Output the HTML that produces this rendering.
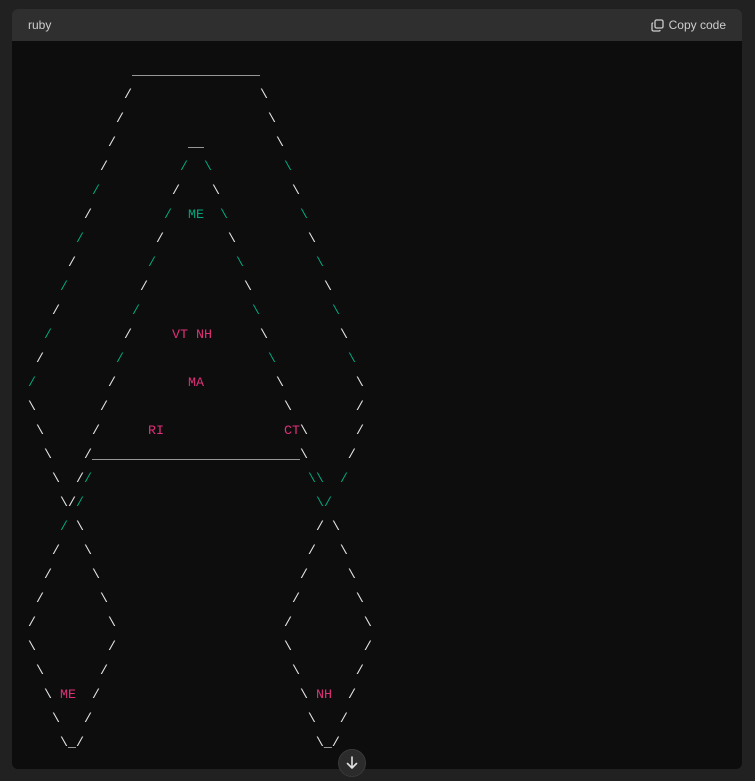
<!DOCTYPE html>
<html><head><meta charset="utf-8"><style>
html,body{margin:0;padding:0;background:#212121;width:755px;height:781px;overflow:hidden}
.box{position:absolute;left:12px;top:9px;width:730px;height:760px;background:#0d0d0d;border-radius:6px;overflow:hidden}
.hd{height:32px;background:#2f2f2f;position:relative;font-family:"Liberation Sans",sans-serif;font-size:12px;color:#cdcdcd}
.hd .l{position:absolute;left:16px;top:9px}
.hd .r{position:absolute;right:16px;top:9px;display:flex;align-items:center;gap:5px}
pre{position:absolute;left:16px;top:51px;margin:0;font-family:"Liberation Mono","DejaVu Sans Mono",monospace;font-size:13.33px;line-height:24px;color:#e8e8e8}
.g{color:#00a67d}.p{color:#df3079}
.dn{position:absolute;left:338px;top:749px;width:28px;height:28px;border-radius:50%;background:#2b2b2b;border:1px solid #3a3a3a;box-sizing:border-box}
</style></head><body>
<div class="box">
<div class="hd"><span class="l">ruby</span><span class="r"><svg width="13" height="13" viewBox="0 0 13 13" fill="none" stroke="#cdcdcd" stroke-width="1.3"><rect x="4" y="1" width="8" height="8" rx="1.5"/><path d="M9 11.2V11a1 1 0 0 1-1 1H2.5A1.5 1.5 0 0 1 1 10.5V5a1 1 0 0 1 1-1h.2"/></svg>Copy code</span></div>
<pre>             ________________
            /                \
           /                  \
          /         __         \
         /         <span class="g">/</span>  <span class="g">\</span>         <span class="g">\</span>
        <span class="g">/</span>         /    \         \
       /         <span class="g">/</span>  <span class="g">ME</span>  <span class="g">\</span>         <span class="g">\</span>
      <span class="g">/</span>         /        \         \
     /         <span class="g">/</span>          <span class="g">\</span>         <span class="g">\</span>
    <span class="g">/</span>         /            \         \
   /         <span class="g">/</span>              <span class="g">\</span>         <span class="g">\</span>
  <span class="g">/</span>         /     <span class="p">VT NH</span>      \         \
 /         <span class="g">/</span>                  <span class="g">\</span>         <span class="g">\</span>
<span class="g">/</span>         /         <span class="p">MA</span>         \         \
\        /                      \        /
 \      /      <span class="p">RI</span>               <span class="p">CT</span>\      /
  \    /__________________________\     /
   \  /<span class="g">/</span>                           <span class="g">\\</span>  <span class="g">/</span>
    \/<span class="g">/</span>                             <span class="g">\/</span>
    <span class="g">/</span> \                             / \
   /   \                           /   \
  /     \                         /     \
 /       \                       /       \
/         \                     /         \
\         /                     \         /
 \       /                       \       /
  \ <span class="p">ME</span>  /                         \ <span class="p">NH</span>  /
   \   /                           \   /
    \_/                             \_/
</pre>
</div>
<div class="dn"><svg width="26" height="26" viewBox="0 0 26 26" fill="none" stroke="#e0e0e0" stroke-width="1.6" stroke-linecap="round" stroke-linejoin="round"><path d="M13 7v11M8.5 13.5L13 18l4.5-4.5"/></svg></div>
</body></html>
